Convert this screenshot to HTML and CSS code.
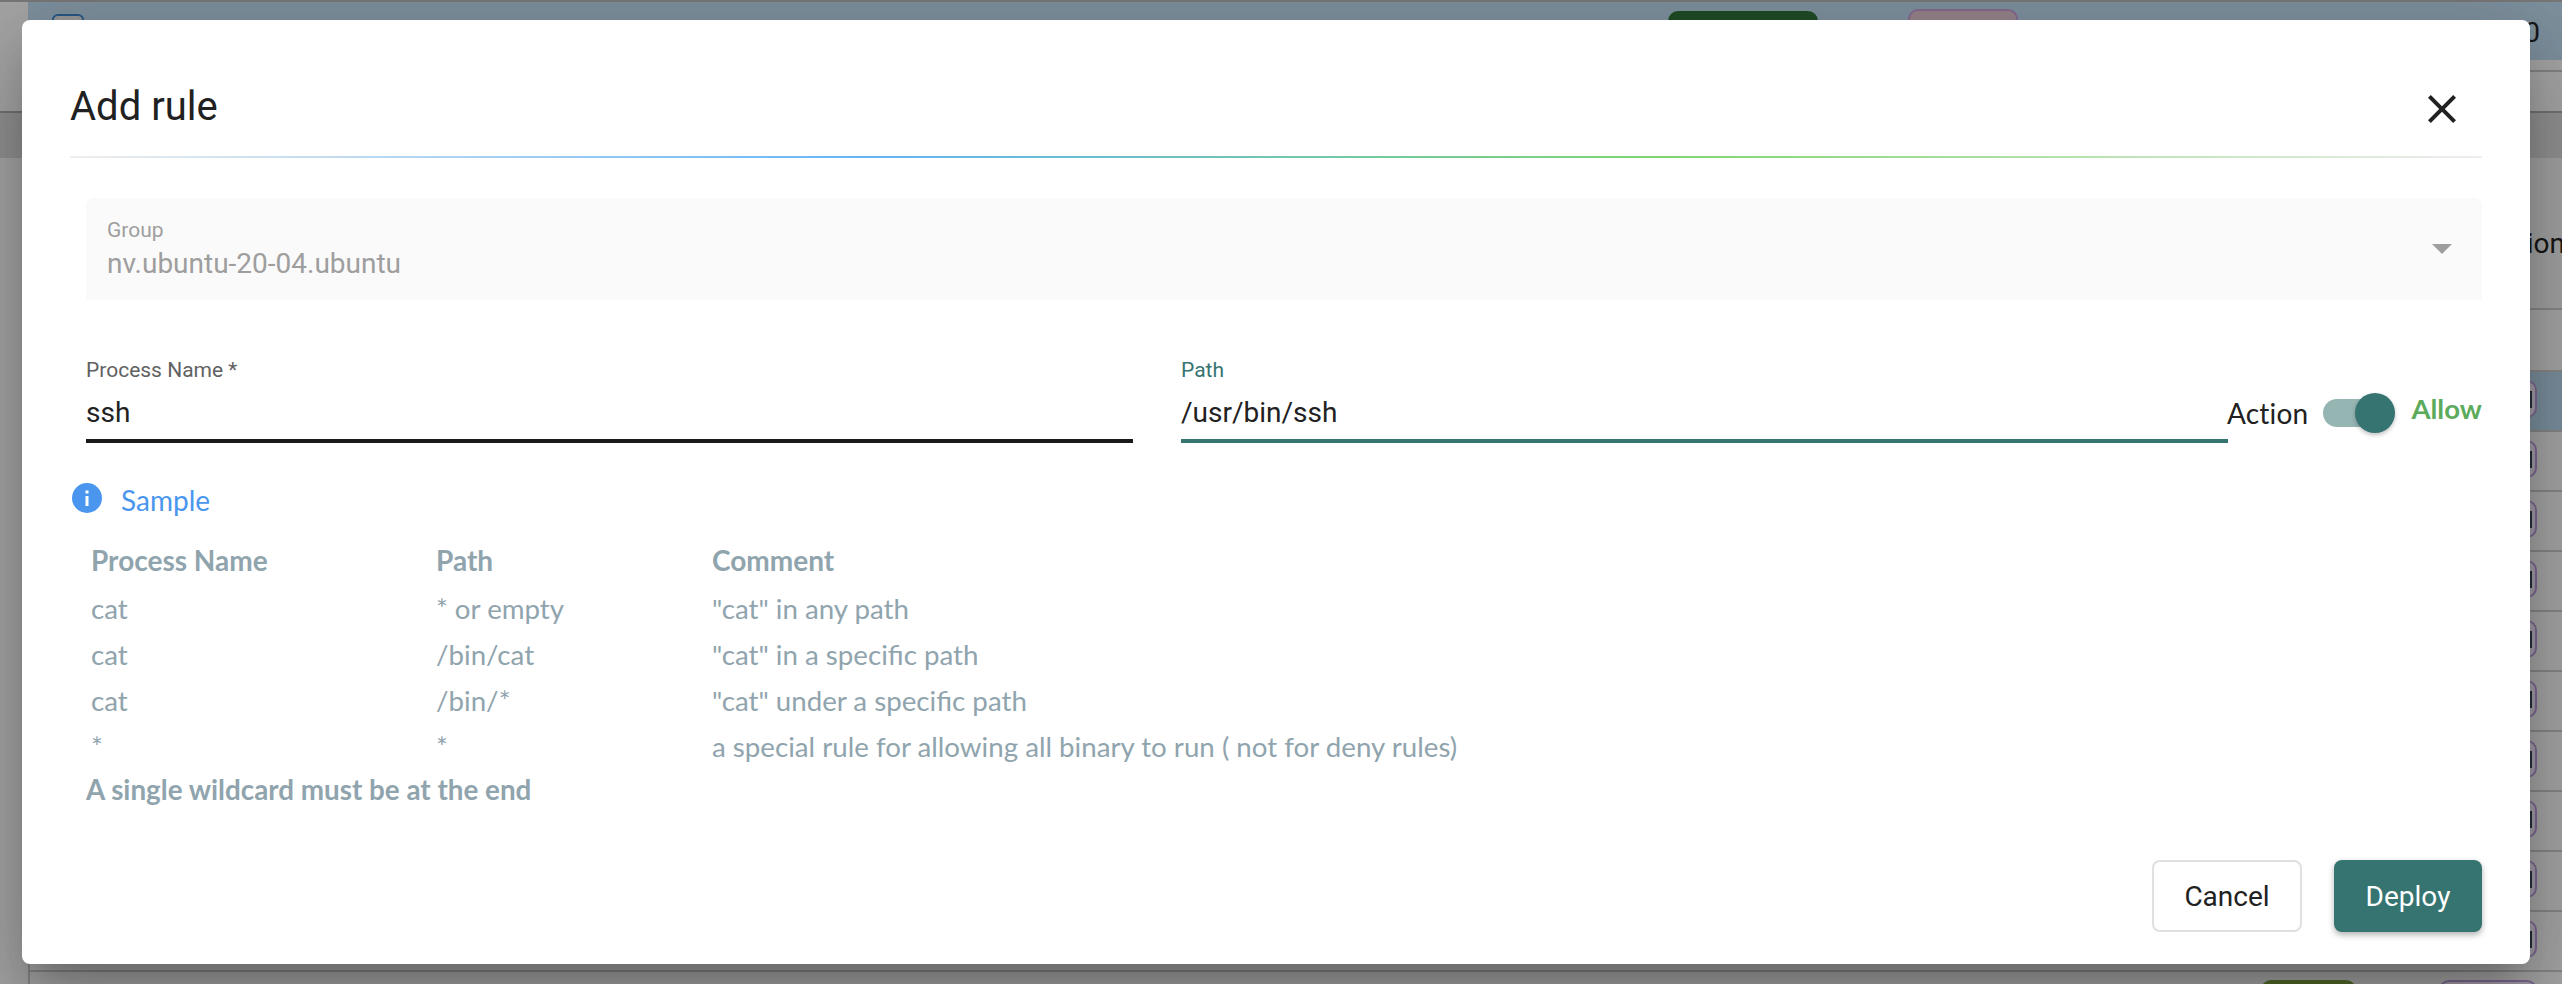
FILE: index.html
```html
<!DOCTYPE html>
<html lang="en">
<head>
  <meta charset="UTF-8">
  <meta name="viewport" content="width=device-width, initial-scale=1.0">
  <title>Add rule</title>
  <link rel="stylesheet" href="styles.css">
</head>
<body>
  <!-- page behind the dialog -->
  <div class="page">
    <div class="top-strip"></div>
    <div class="row-selected">
      <span class="checkbox"></span>
      <span class="tag-green"></span>
      <span class="tag-pink"></span>
      <span class="count">0</span>
    </div>
    <div class="gap-a"></div>
    <div class="gap-b"></div>
    <div class="band"></div>
    <div class="list">
      <div class="head-row"><span>Action</span></div>
      <div class="empty-row"></div>
      <div class="row blue"><span class="pill"></span></div>
      <div class="row"><span class="pill"></span></div>
      <div class="row"><span class="pill"></span></div>
      <div class="row"><span class="pill"></span></div>
      <div class="row"><span class="pill"></span></div>
      <div class="row"><span class="pill"></span></div>
      <div class="row"><span class="pill"></span></div>
      <div class="row"><span class="pill"></span></div>
      <div class="row"><span class="pill"></span></div>
      <div class="row"><span class="pill"></span></div>
      <div class="row"><span class="pill-green"></span><span class="pill"></span></div>
    </div>
  </div>

  <div class="overlay">
    <div class="dialog">
      <div class="dialog-head">
        <h2>Add rule</h2>
        <svg class="close" viewBox="0 0 24 24"><path d="M19 6.41 17.59 5 12 10.59 6.41 5 5 6.41 10.59 12 5 17.59 6.41 19 12 13.41 17.59 19 19 17.59 13.41 12z"/></svg>
      </div>
      <div class="rainbow"></div>

      <div class="select-box">
        <div>
          <div class="select-label">Group</div>
          <div class="select-value">nv.ubuntu-20-04.ubuntu</div>
        </div>
        <span class="arrow"></span>
      </div>

      <div class="fields">
        <div class="field">
          <div class="field-label">Process Name *</div>
          <div class="field-value">ssh</div>
        </div>
        <div class="field focused">
          <div class="field-label">Path</div>
          <div class="field-value">/usr/bin/ssh</div>
        </div>
        <div class="action">
          <span class="action-label">Action</span>
          <span class="toggle"><span class="thumb"></span></span>
          <span class="allow">Allow</span>
        </div>
      </div>

      <div class="sample-title">
        <svg class="info" viewBox="0 0 30 30"><circle cx="15" cy="15" r="15"/><rect class="info-mark" x="13.5" y="13" width="3" height="10"/><rect class="info-mark" x="13.5" y="7.5" width="3" height="3"/></svg>
        <span>Sample</span>
      </div>

      <table class="sample">
        <tr><th>Process Name</th><th>Path</th><th>Comment</th></tr>
        <tr><td>cat</td><td>* or empty</td><td>"cat" in any path</td></tr>
        <tr><td>cat</td><td>/bin/cat</td><td>"cat" in a specific path</td></tr>
        <tr><td>cat</td><td>/bin/*</td><td>"cat" under a specific path</td></tr>
        <tr><td>*</td><td>*</td><td>a special rule for allowing all binary to run ( not for deny rules)</td></tr>
      </table>
      <div class="note">A single wildcard must be at the end</div>

      <div class="actions">
        <button class="btn-cancel">Cancel</button>
        <button class="btn-deploy">Deploy</button>
      </div>
    </div>
  </div>
</body>
</html>
```

FILE: styles.css
```css
html, body {
  margin: 0;
  padding: 0;
  height: 984px;
  overflow: hidden;
  background: #f2f2f2;
  font-family: 'Roboto', sans-serif;
}
.page {
  height: 984px;
  overflow: hidden;
  color: #222;
}
.top-strip {
  height: 2px;
  background: #b0b0b0;
}
.row-selected {
  height: 58px;
  margin-left: 28px;
  background: #b8d4e8;
  display: flex;
  align-items: flex-start;
}
.checkbox {
  width: 28px;
  height: 40px;
  margin: 12px 0 0 24px;
  border: 2px solid #3a7fc4;
  border-radius: 6px;
  background: #ddd;
}
.tag-green {
  width: 150px;
  height: 40px;
  margin: 9px 0 0 1584px;
  border-radius: 10px;
  background: #2f6f35;
}
.tag-pink {
  width: 106px;
  height: 40px;
  margin: 7px 0 0 90px;
  border: 2px solid #c59ad6;
  border-radius: 10px;
  background: #dcc0cc;
}
.count {
  margin: 14px 0 0 auto;
  padding-right: 22px;
  font-size: 28px;
}
.gap-a {
  height: 10px;
  margin-left: 28px;
}
.gap-b {
  height: 39px;
  margin-left: 28px;
  border-top: 2px solid #c0c0c0;
}
.band {
  height: 45px;
  border-top: 2px solid #a8a8a8;
  background: #d4d4d4;
}
.list {
  margin-left: 28px;
  border-left: 2px solid #c4c4c4;
}
.head-row {
  height: 130px;
  padding-top: 20px;
  border-bottom: 2px solid #c4c4c4;
  display: flex;
  justify-content: flex-end;
  align-items: center;
  font-size: 28px;
  margin-right: -3px;
  background: #eee;
}
.empty-row {
  height: 60px;
  border-bottom: 2px solid #c4c4c4;
}
.row {
  height: 50px;
  padding-top: 8px;
  border-bottom: 2px solid #c4c4c4;
  display: flex;
  justify-content: flex-end;
  align-items: flex-start;
  gap: 83px;
}
.row.blue {
  background: #b4d2e6;
}
.pill {
  width: 94px;
  height: 34px;
  margin-right: 25px;
  border: 2px solid #b79ad6;
  border-radius: 10px;
  background: #f0e6f6;
  display: flex;
  justify-content: flex-end;
  align-items: center;
}
.pill::after {
  content: '';
  width: 2px;
  height: 17px;
  margin-right: 3px;
  background: #37474f;
}
.pill-green {
  width: 95px;
  height: 38px;
  border-radius: 10px;
  background: #7c9c3c;
}

.overlay {
  position: absolute;
  top: 0;
  left: 0;
  right: 0;
  bottom: 0;
  background: rgba(0,0,0,0.32);
  padding: 20px 32px 20px 22px;
  display: flex;
}
.dialog {
  flex: 1;
  display: flex;
  flex-direction: column;
  padding: 0 48px 32px;
  background: white;
  border-radius: 8px;
  box-shadow: 0 22px 30px -14px rgba(0,0,0,0.2), 0 48px 76px 6px rgba(0,0,0,0.14), 0 18px 92px 16px rgba(0,0,0,0.12);
}
.dialog-head {
  height: 100px;
  padding-top: 36px;
  display: flex;
  justify-content: space-between;
  align-items: center;
}
.dialog-head h2 {
  margin: 0;
  font-size: 40px;
  font-weight: 400;
  color: #212121;
}
.close {
  width: 48px;
  height: 48px;
  margin-right: 16px;
  position: relative;
  top: 3px;
  fill: #212121;
}
.rainbow {
  height: 2px;
  background: linear-gradient(90deg, #eeeeee 0, #64b5f6 33%, #7ed56f 66%, #eeeeee 100%);
}
.select-box {
  height: 102px;
  margin: 40px 0 0 16px;
  padding: 0 30px 0 21px;
  background: #fafafa;
  border-radius: 8px 8px 0 0;
  display: flex;
  justify-content: space-between;
  align-items: center;
  color: #9e9e9e;
}
.select-label {
  font-size: 21px;
  line-height: 28px;
  margin-top: 2px;
}
.select-value {
  font-size: 28px;
  line-height: 40px;
}
.arrow {
  width: 0;
  height: 0;
  border-left: 10px solid transparent;
  border-right: 10px solid transparent;
  border-top: 10px solid #9e9e9e;
}
.fields {
  display: flex;
  gap: 48px;
  margin: 56px 0 0 16px;
  align-items: flex-start;
}
.field {
  width: 1047px;
  flex: none;
}
.field-label {
  font-size: 21px;
  line-height: 28px;
  color: #616161;
}
.field-value {
  height: 55px;
  line-height: 57px;
  font-size: 28px;
  color: #212121;
  border-bottom: 4px solid #1a1a1a;
}
.focused .field-label {
  color: #367472;
}
.focused .field-value {
  border-bottom-color: #367472;
}
.action {
  display: flex;
  align-items: flex-start;
  margin-left: -49px;
  font-family: 'Lato', sans-serif;
}
.action-label {
  font-size: 28px;
  letter-spacing: 0.2px;
  color: #212121;
  margin-top: 40px;
}
.toggle {
  width: 68px;
  height: 28px;
  margin: 43px 0 0 15px;
  border-radius: 14px;
  background: #95b5b3;
  display: flex;
  justify-content: flex-end;
  align-items: center;
}
.thumb {
  width: 40px;
  height: 40px;
  flex: none;
  margin-right: -4px;
  border-radius: 50%;
  background: #367472;
  box-shadow: 0 2px 4px rgba(0,0,0,0.25);
}
.allow {
  margin: 36px 0 0 20px;
  font-size: 27.5px;
  font-weight: 700;
  color: #5cab5c;
}
.sample-title {
  display: flex;
  align-items: center;
  gap: 19px;
  margin: 40px 0 0 2px;
  font-family: 'Lato', sans-serif;
  font-size: 28px;
  color: #4a96ee;
}
.info {
  width: 30px;
  height: 30px;
  margin-bottom: 4px;
  fill: #4a96ee;
}
.info-mark {
  fill: white;
}
.sample {
  margin: 18px 0 0 16px;
  border-collapse: collapse;
  font-family: 'Lato', sans-serif;
  font-size: 27.7px;
  color: #90a4ae;
}
.sample th, .sample td {
  padding: 0 0 0 5px;
  height: 46px;
  text-align: left;
}
.sample th {
  height: 50px;
  font-size: 28px;
}
.sample th:first-child, .sample td:first-child {
  width: 340px;
}
.sample th:nth-child(2), .sample td:nth-child(2) {
  width: 271px;
}
.note {
  margin: 4px 0 0 16px;
  font-family: 'Lato', sans-serif;
  font-size: 27.8px;
  font-weight: 700;
  color: #90a4ae;
}
.actions {
  margin-top: auto;
  display: flex;
  justify-content: flex-end;
  gap: 32px;
}
.actions button {
  height: 72px;
  border-radius: 8px;
  font-family: 'Roboto', sans-serif;
  font-size: 28px;
  cursor: pointer;
}
.btn-cancel {
  width: 150px;
  background: white;
  color: #212121;
  border: 2px solid #e0e0e0;
}
.btn-deploy {
  width: 148px;
  background: #367472;
  color: white;
  border: none;
  box-shadow: 0 3px 6px rgba(0,0,0,0.3);
}
```
